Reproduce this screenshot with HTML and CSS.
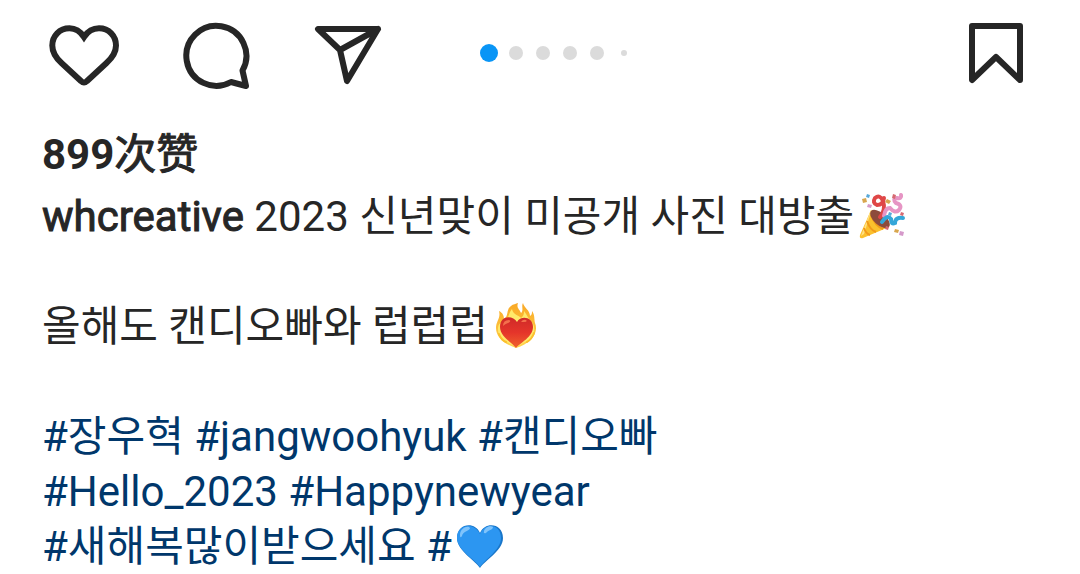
FILE: index.html
```html
<!DOCTYPE html>
<html lang="zh-CN">
<head>
    <meta charset="UTF-8">
    <meta name="viewport" content="width=device-width, initial-scale=1.0">
    <title>whcreative</title>
    <link rel="stylesheet" href="styles.css">
</head>

<body>
    <div class="post">
        <div class="actions">
            <button class="action" aria-label="赞">
                <svg class="icon" viewBox="0 0 72 72">
                    <path d="M36 17C32 11 27 8.3 21.5 8.3C11.5 8.3 4.3 16 4.3 25.5C4.3 33 8 38 13.5 43L33.2 61.2Q36 64 38.8 61.2L58.5 43C64 38 68 33 68 25.5C68 16 61 8.3 51 8.3C45 8.3 40 11 36 17Z"/>
                </svg>
            </button>
            <button class="action" aria-label="评论">
                <svg class="icon round" viewBox="0 0 72 72">
                    <path d="M51 62A30 30 0 1 1 62.5 50.5L66 66Z"/>
                </svg>
            </button>
            <button class="action" aria-label="分享">
                <svg class="icon round" viewBox="0 0 72 72">
                    <path d="M6 9H66L35 61L28 30ZM28 30L66 9"/>
                </svg>
            </button>
            <div class="dots">
                <span class="dot active"></span>
                <span class="dot"></span>
                <span class="dot"></span>
                <span class="dot"></span>
                <span class="dot"></span>
                <span class="dot small"></span>
            </div>
            <button class="action save" aria-label="收藏">
                <svg class="icon round" viewBox="0 0 72 72">
                    <path d="M12 6H60V60L36 37L12 60Z"/>
                </svg>
            </button>
        </div>

        <div class="content">
            <p class="likes">899<span class="likes-label">次赞</span></p>
            <div class="caption" lang="ko">
                <p>
                    <a class="username" href="#">whcreative</a> 2023 신년맞이 미공개 사진 대방출<svg class="emoji" viewBox="0 0 48 48" role="img" aria-label="🎉">
                        <path fill="#fbc02d" d="M13 18L2 43Q1 47 5 46L31 35Z"/>
                        <path fill="#ffe082" d="M13 20L6 42L3 44L12 20Z"/>
                        <path fill="none" stroke="#f19a1a" stroke-width="2" d="M9 29Q12 38 18 40M6 36Q8 42 12 43M13 23Q17 34 25 37"/>
                        <ellipse cx="22" cy="27" rx="6" ry="12" transform="rotate(-48 22 27)" fill="#8d4b3b"/>
                        <path fill="none" stroke="#df4747" stroke-width="4" stroke-linecap="round" d="M22 25Q28 18 25 9Q22 2 17 6Q14 11 19 13Q25 13 26 6"/>
                        <path fill="none" stroke="#e695c4" stroke-width="4" stroke-linecap="round" d="M26 24Q27 16 32 16Q37 22 41 18Q45 13 38 11Q34 7 39 6Q44 7 43 3"/>
                        <path fill="none" stroke="#35a6d8" stroke-width="4" stroke-linecap="round" d="M24 30Q29 22 33 27Q33 33 37 31Q37 25 45 26"/>
                        <path fill="#d8a64e" d="M4 7l4-1 1 4-4 1zM29 7l4 2-2 3-4-2zM37 37l4 1-1 3-4-1z"/>
                        <path fill="#58a9d9" d="M9 2l3 1-1 3-3-1zM31 20l3 1-1 3-3-1z"/>
                        <path fill="#d66a72" d="M35 2l3 1-1 4-3-1zM43 20l3 1-1 3-3-1zM28 34l3 1-1 3-3-1z"/>
                        <path fill="#d599ca" d="M10 12l4 1-1 3-4-1zM42 39l4 1-1 4-4-1z"/>
                    </svg>
                </p>
                <p>
                    올해도 캔디오빠와 럽럽럽<svg class="emoji" viewBox="0 0 48 48" role="img" aria-label="❤️‍🔥">
                        <defs>
                            <linearGradient id="heartRed" x1="0" y1="0" x2="0" y2="1">
                                <stop offset="0" stop-color="#cf2a28"/>
                                <stop offset="0.5" stop-color="#e5352a"/>
                                <stop offset="1" stop-color="#f0632c"/>
                            </linearGradient>
                            <linearGradient id="flame" x1="0" y1="0" x2="0" y2="1">
                                <stop offset="0" stop-color="#f9a825"/>
                                <stop offset="1" stop-color="#ffd54f"/>
                            </linearGradient>
                        </defs>
                        <path fill="url(#flame)" d="M24 46C12 42 4 35 4 26C4 19 9 16 7 9C11 11 12 14 12 17C17 14 14 7 19 4C21 2 24 2 26 1C24 6 28 8 29 11C32 8 29 4 31 1C32 6 38 8 38 14C40 13 40 11 40 9C43 13 42 17 43 21C47 31 39 41 24 46Z"/>
                        <path fill="#ffe96b" d="M6 27C6 21 10 20 11 19C18 17 16 11 20 7C21 13 27 13 29 16C32 14 32 11 32 9C35 13 36 16 38 18C45 24 43 35 35 39L24 45L13 39C8 36 6 32 6 27Z"/>
                        <path fill="url(#heartRed)" d="M24 46C21 41 8 35 8 25C8 13 21 13 25 20C29 13 41 15 41 25C41 35 28 41 24 46Z"/>
                        <path fill="#f4704c" d="M11 24Q11 18 17 18Q20 19 16 21Q13 22 11 24ZM29 20Q31 17 34 18Q36 20 32 20Z"/>
                        <path fill="none" stroke="#fbc02d" stroke-width="2" stroke-linecap="round" d="M7 32Q9 38 14 40M42 31Q40 37 35 40"/>
                    </svg>
                </p>
                <p class="tags">
                    <a href="#">#장우혁</a> <a href="#">#jangwoohyuk</a> <a href="#">#캔디오빠</a><br>
                    <a href="#">#Hello_2023</a> <a href="#">#Happynewyear</a><br>
                    <a href="#">#새해복많이받으세요</a> <a href="#">#<svg class="emoji" viewBox="0 0 48 48" role="img" aria-label="💙">
                        <path fill="#1976c9" d="M24 46C20 39 1 29 1 16C1 1 19 -1 24 11C29 -1 47 1 47 16C47 29 28 39 24 46Z"/>
                        <path fill="#2c96f1" d="M24 45C20 38 1 28 1 16C1 2 18 0 24 12C29 0 45 2 45 16C45 28 28 38 24 45Z"/>
                        <path fill="#7fc3fb" d="M4 13C4 6 12 3 14 6C14 9 7 9 6 14Q4 17 4 13ZM28 9C29 5 35 3 37 5C37 8 32 8 30 11Q27 12 28 9Z"/>
                    </svg></a>
                </p>
            </div>
        </div>
    </div>
</body>
</html>
```
FILE: styles.css
```css
* {
    box-sizing: border-box;
}

body {
    margin: 0;
    background: #fff;
    color: #262626;
    font-family: Roboto, "Noto Sans CJK KR", sans-serif;
    font-size: 42px;
    line-height: 55px;
}

p {
    margin: 0;
}

a {
    color: inherit;
    text-decoration: none;
}

.actions {
    display: flex;
    align-items: center;
    gap: 60px;
    padding: 20px 48px 0;
}

.action {
    padding: 0;
    border: none;
    background: none;
    cursor: pointer;
}

.icon {
    display: block;
    width: 72px;
    height: 72px;
    fill: none;
    stroke: #262626;
    stroke-width: 6;
}

.round {
    stroke-linejoin: round;
    stroke-linecap: round;
}

.save {
    margin-left: auto;
}

.dots {
    display: grid;
    grid-template-columns: repeat(6, 27px);
    place-items: center;
    margin-left: 31px;
    padding-bottom: 6px;
}

.dot {
    width: 14px;
    height: 14px;
    border-radius: 50%;
    background: #dbdbdb;
}

.dot.active {
    width: 18px;
    height: 18px;
    background: #0995f6;
}

.dot.small {
    width: 6px;
    height: 6px;
}

.content {
    padding: 35px 42px 0;
}

.likes {
    margin-bottom: 7px;
    font-family: Roboto, "Noto Sans CJK SC", sans-serif;
    font-weight: 700;
}

.likes-label {
    font-weight: 400;
    -webkit-text-stroke: 1px #262626;
}

.caption {
    display: flex;
    flex-direction: column;
    gap: 55px;
}

.username {
    -webkit-text-stroke: 1px #262626;
}

.tags {
    color: #00376b;
}

.emoji {
    width: 48px;
    height: 48px;
    margin-left: 4px;
    vertical-align: -9px;
}
```
